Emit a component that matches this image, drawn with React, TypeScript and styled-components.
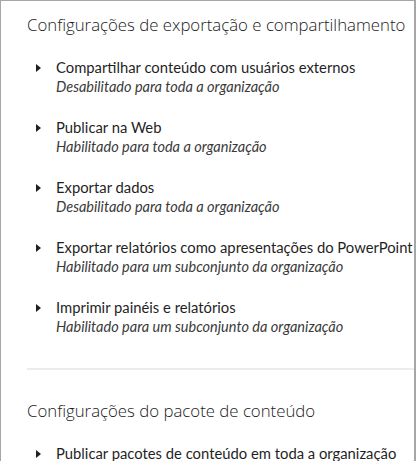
import React from "react";
import styled, { createGlobalStyle } from "styled-components";

const GlobalStyle = createGlobalStyle`
  html, body {
    margin: 0;
    padding: 0;
    background: #ffffff;
  }
  body {
    font-family: Lato, "Open Sans", "Liberation Sans", sans-serif;
    color: #252525;
  }
`;

const Frame = styled.div`
  box-sizing: border-box;
  width: 416px;
  height: 461px;
  border: 1px solid #a6a6a6;
  border-bottom: none;
  border-right-width: 2px;
  overflow: hidden;
  padding: 11px 0 0 26px;
`;

const Section = styled.section<{ $divided?: boolean }>`
  padding-bottom: ${(p) => (p.$divided ? "31px" : "0")};
  border-bottom: ${(p) => (p.$divided ? "2px solid #ececec" : "none")};
  margin-bottom: ${(p) => (p.$divided ? "28px" : "0")};
`;

const Heading = styled.h2`
  margin: 0 0 19px;
  font-family: "Open Sans", Lato, sans-serif;
  font-size: 16.8px;
  font-weight: 300;
  line-height: 26px;
  white-space: nowrap;
  color: #1a1a1a;
`;

const List = styled.ul`
  list-style: none;
  margin: 0;
  padding: 0 0 0 9px;
  display: flex;
  flex-direction: column;
  gap: 20px;
`;

const Item = styled.li`
  display: grid;
  grid-template-columns: 20px 1fr;
  align-items: start;
`;

const Caret = styled.span`
  width: 0;
  height: 0;
  margin-top: 7px;
  border-top: 4px solid transparent;
  border-bottom: 4px solid transparent;
  border-left: 5px solid #202020;
`;

const Title = styled.div`
  font-size: 14.8px;
  line-height: 20px;
  white-space: nowrap;
  color: #1f1f1f;
`;

const Status = styled.div`
  font-size: 14.5px;
  line-height: 20px;
  font-style: italic;
  white-space: nowrap;
  color: #3a3a3a;
`;

type Setting = { title: string; status?: string };

const exportSettings: Setting[] = [
  { title: "Compartilhar conteúdo com usuários externos", status: "Desabilitado para toda a organização" },
  { title: "Publicar na Web", status: "Habilitado para toda a organização" },
  { title: "Exportar dados", status: "Desabilitado para toda a organização" },
  { title: "Exportar relatórios como apresentações do PowerPoint", status: "Habilitado para um subconjunto da organização" },
  { title: "Imprimir painéis e relatórios", status: "Habilitado para um subconjunto da organização" },
];

const packSettings: Setting[] = [
  { title: "Publicar pacotes de conteúdo em toda a organização" },
];

const SettingList = ({ items }: { items: Setting[] }) => (
  <List>
    {items.map((s) => (
      <Item key={s.title}>
        <Caret />
        <div>
          <Title>{s.title}</Title>
          {s.status && <Status>{s.status}</Status>}
        </div>
      </Item>
    ))}
  </List>
);

export default function App() {
  return (
    <>
      <GlobalStyle />
      <Frame>
        <Section $divided>
          <Heading>Configurações de exportação e compartilhamento</Heading>
          <SettingList items={exportSettings} />
        </Section>
        <Section>
          <Heading>Configurações do pacote de conteúdo</Heading>
          <SettingList items={packSettings} />
        </Section>
      </Frame>
    </>
  );
}
